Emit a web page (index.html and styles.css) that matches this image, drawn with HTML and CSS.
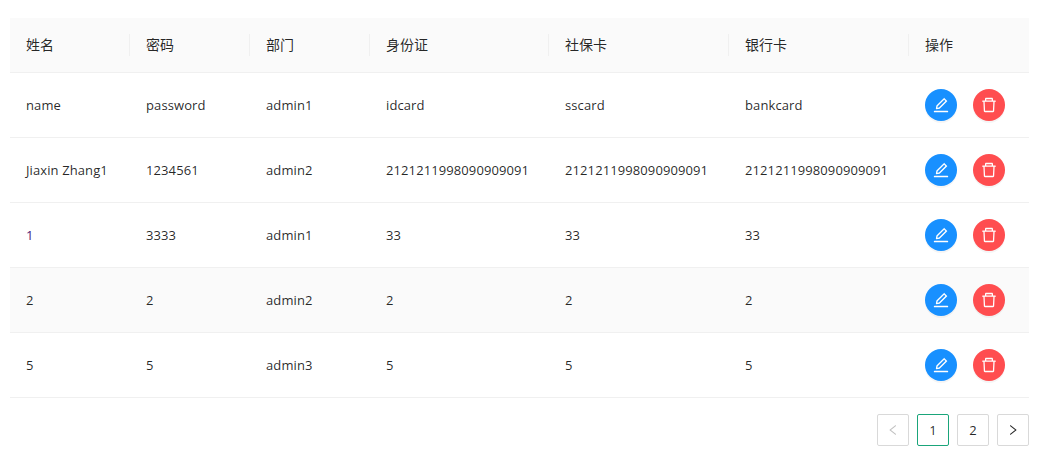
FILE: index.html
```html
<!DOCTYPE html>
<html lang="zh">
<head>
<meta charset="utf-8">
<title>用户列表</title>
<link rel="stylesheet" href="styles.css">
</head>
<body>
<svg class="defs" aria-hidden="true">
<symbol id="i-edit" viewBox="64 64 896 896"><path d="M257.7 752c2 0 4-.2 6-.5L431.9 722c2-.4 3.9-1.3 5.3-2.8l423.9-423.9a9.96 9.96 0 0 0 0-14.1L694.9 114.9c-1.9-1.9-4.4-2.9-7.1-2.9s-5.2 1-7.1 2.9L256.8 538.8c-1.5 1.5-2.4 3.3-2.8 5.3l-29.5 168.2a33.5 33.5 0 0 0 9.4 29.8c6.6 6.4 14.9 9.9 23.8 9.9zm67.4-174.4L687.8 215l73.3 73.3-362.7 362.6-88.9 15.7 15.6-89zM880 836H144c-17.7 0-32 14.3-32 32v36c0 4.4 3.6 8 8 8h784c4.4 0 8-3.6 8-8v-36c0-17.7-14.3-32-32-32z"/></symbol>
<symbol id="i-del" viewBox="64 64 896 896"><path d="M360 184h-8c4.4 0 8-3.6 8-8v8h304v-8c0 4.4 3.6 8 8 8h-8v72h72v-80c0-35.3-28.7-64-64-64H352c-35.3 0-64 28.7-64 64v80h72v-72zm504 72H160c-17.7 0-32 14.3-32 32v32c0 4.4 3.6 8 8 8h60.4l24.7 523c1.6 34.1 29.8 61 63.9 61h454c34.2 0 62.3-26.8 63.9-61l24.7-523H888c4.4 0 8-3.6 8-8v-32c0-17.7-14.3-32-32-32zM731.3 840H292.7l-24.2-512h487l-24.2 512z"/></symbol>
<symbol id="i-left" viewBox="64 64 896 896"><path d="M724 218.3V141c0-6.7-7.7-10.4-12.9-6.3L260.3 486.8a31.86 31.86 0 0 0 0 50.3l450.8 352.1c5.3 4.1 12.9.4 12.9-6.3v-77.3c0-4.9-2.3-9.6-6.1-12.6l-360-281 360-281.1c3.8-3 6.1-7.7 6.1-12.6z"/></symbol>
<symbol id="i-right" viewBox="64 64 896 896"><path d="M765.7 486.8L314.9 134.7A7.97 7.97 0 0 0 302 141v77.3c0 4.9 2.3 9.6 6.1 12.6l360 281.1-360 281.1c-3.9 3-6.1 7.7-6.1 12.6V883c0 6.7 7.7 10.4 12.9 6.3l450.8-352.1a31.96 31.96 0 0 0 0-50.4z"/></symbol>
</svg>
<main class="page">
<table class="grid">
<colgroup><col class="c1"><col class="c2"><col class="c3"><col class="c4"><col class="c5"><col class="c6"><col class="c7"></colgroup>
<thead>
<tr><th>姓名</th><th>密码</th><th>部门</th><th>身份证</th><th>社保卡</th><th>银行卡</th><th>操作</th></tr>
</thead>
<tbody>
<tr><td>name</td><td>password</td><td>admin1</td><td>idcard</td><td>sscard</td><td>bankcard</td><td><div class="ops"><button class="op edit"><svg><use href="#i-edit"/></svg></button><button class="op del"><svg><use href="#i-del"/></svg></button></div></td></tr>
<tr><td>Jiaxin Zhang1</td><td>1234561</td><td>admin2</td><td>2121211998090909091</td><td>2121211998090909091</td><td>2121211998090909091</td><td><div class="ops"><button class="op edit"><svg><use href="#i-edit"/></svg></button><button class="op del"><svg><use href="#i-del"/></svg></button></div></td></tr>
<tr><td class="first">1</td><td>3333</td><td>admin1</td><td>33</td><td>33</td><td>33</td><td><div class="ops"><button class="op edit"><svg><use href="#i-edit"/></svg></button><button class="op del"><svg><use href="#i-del"/></svg></button></div></td></tr>
<tr class="hover"><td>2</td><td>2</td><td>admin2</td><td>2</td><td>2</td><td>2</td><td><div class="ops"><button class="op edit"><svg><use href="#i-edit"/></svg></button><button class="op del"><svg><use href="#i-del"/></svg></button></div></td></tr>
<tr><td>5</td><td>5</td><td>admin3</td><td>5</td><td>5</td><td>5</td><td><div class="ops"><button class="op edit"><svg><use href="#i-edit"/></svg></button><button class="op del"><svg><use href="#i-del"/></svg></button></div></td></tr>
</tbody>
</table>
<nav class="pager">
<button class="pg off"><svg><use href="#i-left"/></svg></button>
<button class="pg on">1</button>
<button class="pg">2</button>
<button class="pg"><svg><use href="#i-right"/></svg></button>
</nav>
</main>
</body>
</html>
```
FILE: styles.css
```css
* { box-sizing: border-box; }
html, body { margin: 0; background: #fff; }
body {
  font-family: "Open Sans", "Noto Sans CJK SC", sans-serif;
  font-size: 13px;
  letter-spacing: .1px;
  color: rgba(0, 0, 0, .85);
}
.defs { display: none; }
.page { padding: 18px 8px 0 10px; }
.grid { width: 1019px; table-layout: fixed; border-collapse: collapse; }
.c1, .c2, .c3, .c7 { width: 120px; }
.c4 { width: 179px; }
.c5, .c6 { width: 180px; }
th {
  position: relative;
  height: 54px;
  padding: 0 16px 1px;
  text-align: left;
  font-weight: 400;
  font-size: 14px;
  letter-spacing: 0;
  background: #fafafa;
  border-bottom: 1px solid #f0f0f0;
}
th:not(:last-child)::after {
  content: "";
  position: absolute;
  right: 0;
  top: 50%;
  height: 22px;
  width: 1px;
  margin-top: -11px;
  background: #f0f0f0;
}
td {
  height: 65px;
  padding: 0 16px;
  border-bottom: 1px solid #f0f0f0;
  white-space: nowrap;
}
.hover td { background: #fafafa; }
.first { color: #4a1a7a; }
.ops { display: flex; gap: 16px; }
.op {
  display: flex;
  align-items: center;
  justify-content: center;
  width: 32px;
  height: 32px;
  padding: 0;
  border: 0;
  border-radius: 50%;
  box-shadow: 0 2px 0 rgba(0, 0, 0, .04);
}
.op svg { width: 16px; height: 16px; fill: #fff; }
.edit { background: #1890ff; }
.del { background: #ff4d4f; }
.pager { display: flex; justify-content: flex-end; gap: 8px; margin-top: 16px; }
.pg {
  display: flex;
  align-items: center;
  justify-content: center;
  width: 32px;
  height: 32px;
  padding: 0;
  background: #fff;
  border: 1px solid #d9d9d9;
  border-radius: 2px;
  font: inherit;
  color: rgba(0, 0, 0, .85);
}
.pg svg { width: 12px; height: 12px; fill: rgba(0, 0, 0, .85); }
.off svg { fill: rgba(0, 0, 0, .25); }
.on { border-color: #1aa57a; }
```
